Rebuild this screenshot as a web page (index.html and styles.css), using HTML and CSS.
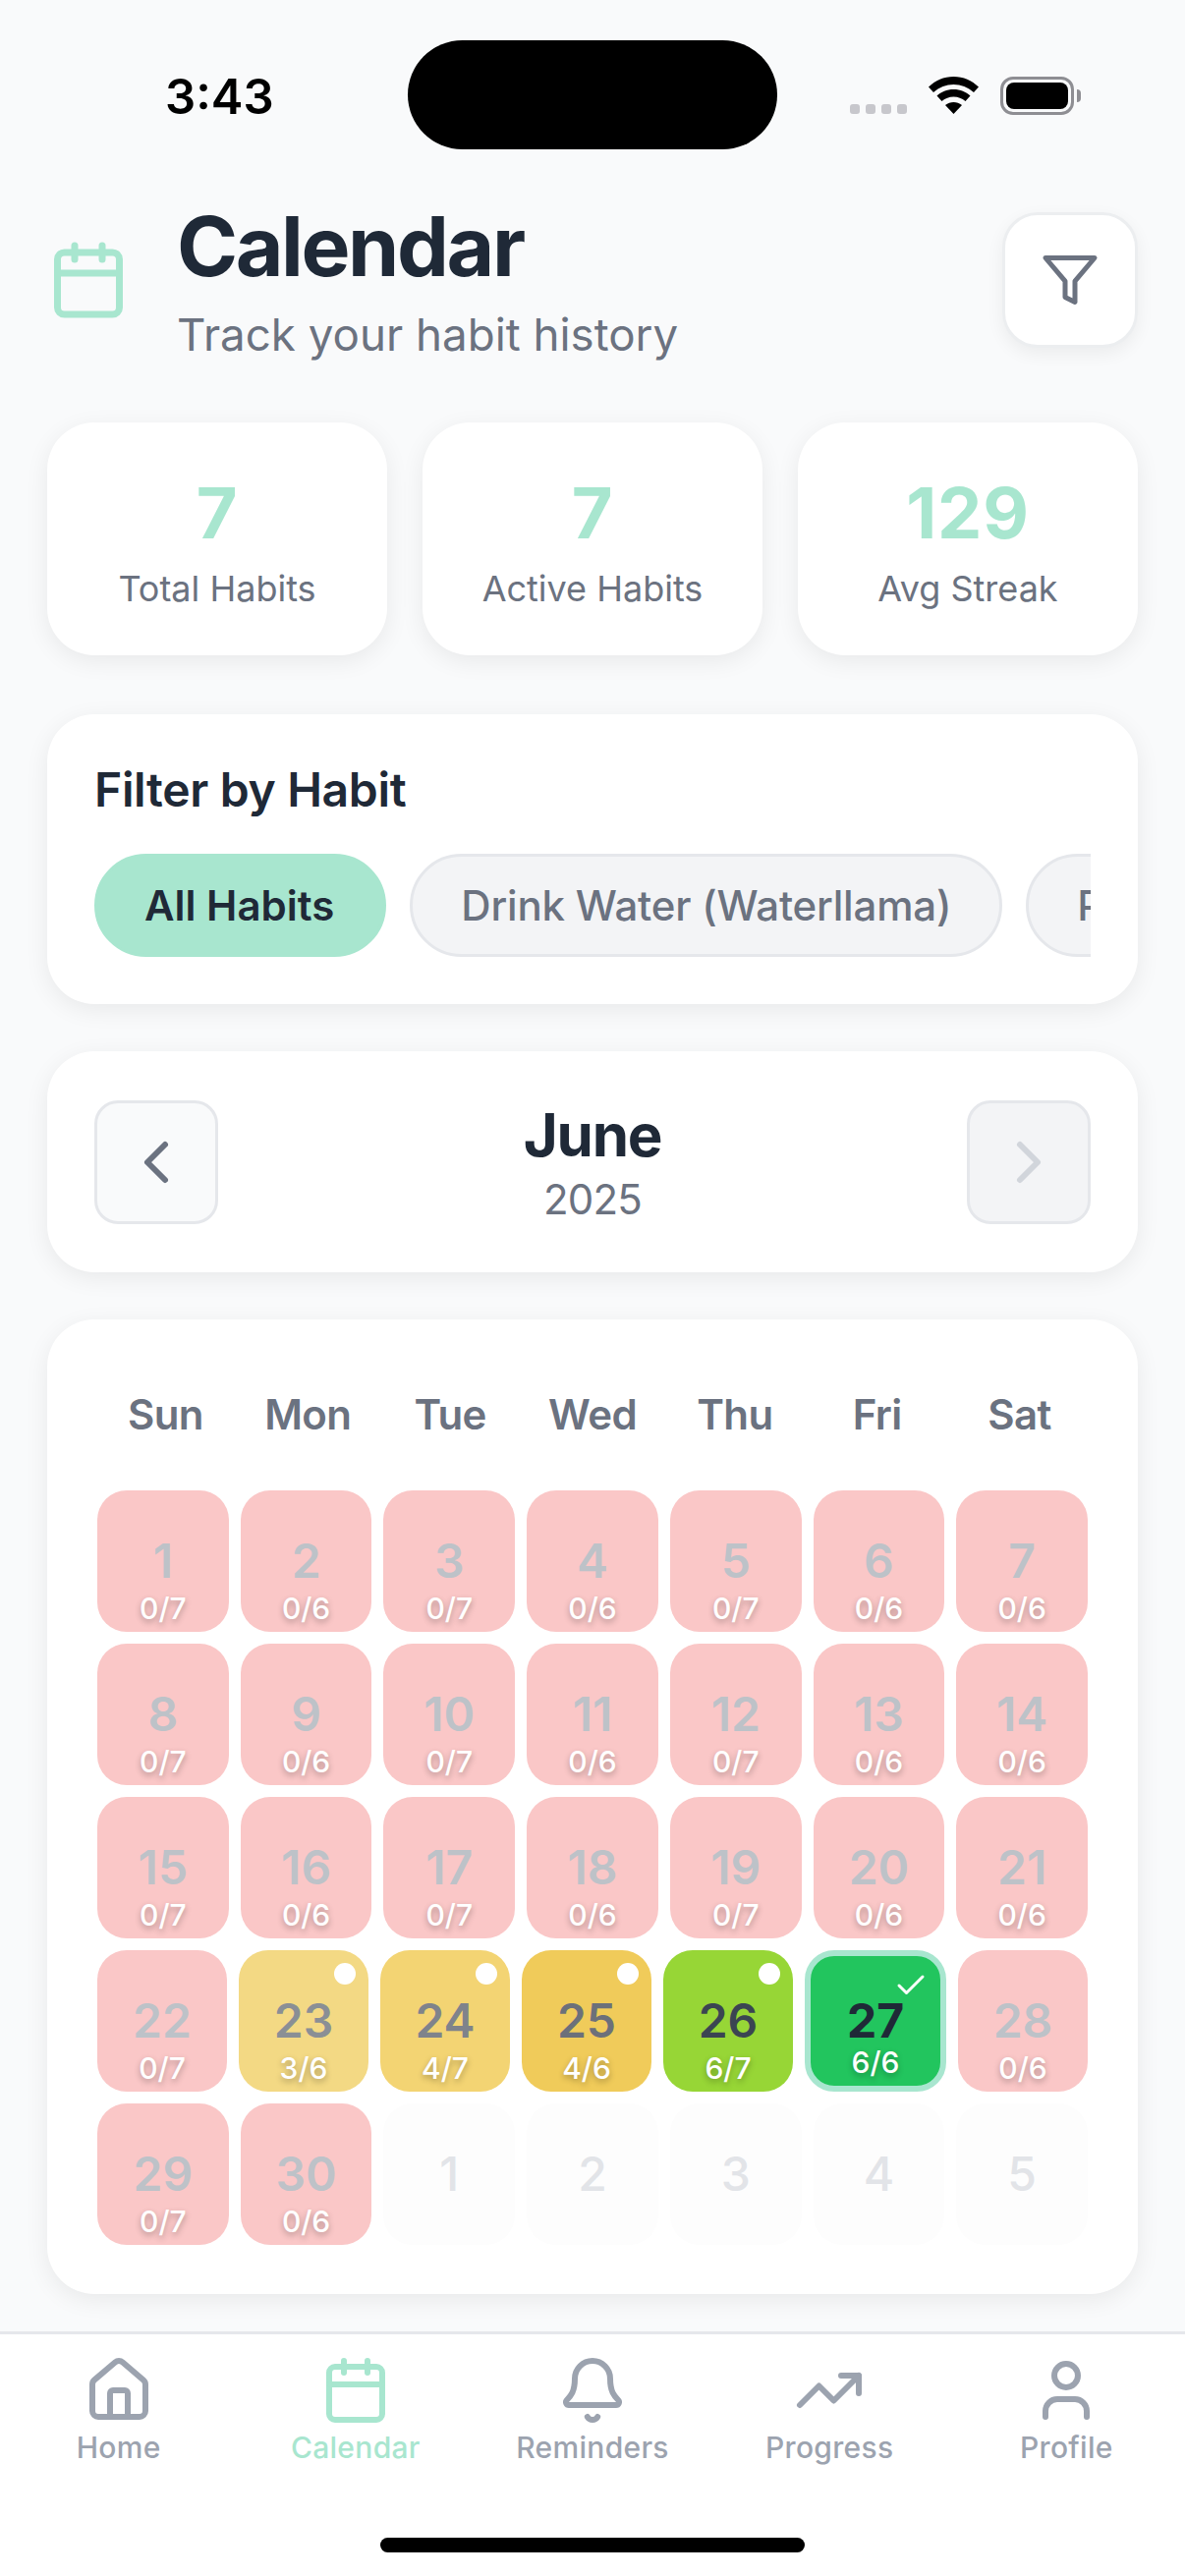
FILE: index.html
```html
<!DOCTYPE html>
<html lang="en">
<head>
<meta charset="utf-8">
<title>Calendar</title>
<link rel="stylesheet" href="styles.css">
</head>
<body>
<div class="app">
  <div class="status">
    <span class="time">3:43</span>
    <div class="island"></div>
    <div class="status-right">
      <div class="dots"><i></i><i></i><i></i><i></i></div>
      <svg class="wifi" viewBox="0 0 51 38"><path d="M25.5 0C15.5 0 7 4 0 10.500L5 16C11 10.800 18 8 25.500 8S40 10.800 46 16L51 10.500C44 4 35.500 0 25.500 0Z"/><path d="M25.500 13C18.500 13 13 15.500 8.500 19.500L13.500 25C17 22 21 20.500 25.500 20.500S34 22 37.500 25L42.500 19.500C38 15.500 32.500 13 25.500 13Z"/><path d="M25.500 26C22.500 26 19.500 27 17 29L25.500 38L34 29C31.500 27 28.500 26 25.500 26Z"/></svg>
      <div class="battery"><div class="battery-body"><div class="battery-fill"></div></div><div class="battery-nub"></div></div>
    </div>
  </div>
  <main class="main">
    <header class="header">
      <svg class="header-icon" viewBox="0 0 24 24"><path d="M8 2v4"/><path d="M16 2v4"/><rect x="3" y="4" width="18" height="18" rx="2"/><path d="M3 10h18"/></svg>
      <div class="header-text">
        <h1 class="title">Calendar</h1>
        <p class="subtitle">Track your habit history</p>
      </div>
      <button class="filter-btn"><svg class="filter-icon" viewBox="0 0 24 24"><polygon points="22 3 2 3 10 12.460 10 19 14 21 14 12.460 22 3"/></svg></button>
    </header>

    <section class="stats">
      <div class="stat card"><div class="stat-num">7</div><div class="stat-label">Total Habits</div></div>
      <div class="stat card"><div class="stat-num">7</div><div class="stat-label">Active Habits</div></div>
      <div class="stat card"><div class="stat-num">129</div><div class="stat-label">Avg Streak</div></div>
    </section>

    <section class="card filter-card">
      <h2 class="filter-title">Filter by Habit</h2>
      <div class="chips">
        <span class="chip chip-on">All Habits</span>
        <span class="chip">Drink Water (Waterllama)</span>
        <span class="chip">Practice</span>
      </div>
    </section>

    <section class="card month-card">
      <button class="nav-btn"><svg class="chev" viewBox="0 0 24 24"><path d="m15 18-6-6 6-6"/></svg></button>
      <div class="month-text">
        <div class="month">June</div>
        <div class="year">2025</div>
      </div>
      <button class="nav-btn nav-btn-off"><svg class="chev" viewBox="0 0 24 24"><path d="m9 18 6-6-6-6"/></svg></button>
    </section>

    <section class="card cal-card">
      <div class="weekdays">
        <span>Sun</span><span>Mon</span><span>Tue</span><span>Wed</span><span>Thu</span><span>Fri</span><span>Sat</span>
      </div>
      <div class="weeks">
        <div class="week">
          <div class="day miss"><b>1</b><small>0/7</small></div>
          <div class="day miss"><b>2</b><small>0/6</small></div>
          <div class="day miss"><b>3</b><small>0/7</small></div>
          <div class="day miss"><b>4</b><small>0/6</small></div>
          <div class="day miss"><b>5</b><small>0/7</small></div>
          <div class="day miss"><b>6</b><small>0/6</small></div>
          <div class="day miss"><b>7</b><small>0/6</small></div>
        </div>
        <div class="week">
          <div class="day miss"><b>8</b><small>0/7</small></div>
          <div class="day miss"><b>9</b><small>0/6</small></div>
          <div class="day miss"><b>10</b><small>0/7</small></div>
          <div class="day miss"><b>11</b><small>0/6</small></div>
          <div class="day miss"><b>12</b><small>0/7</small></div>
          <div class="day miss"><b>13</b><small>0/6</small></div>
          <div class="day miss"><b>14</b><small>0/6</small></div>
        </div>
        <div class="week">
          <div class="day miss"><b>15</b><small>0/7</small></div>
          <div class="day miss"><b>16</b><small>0/6</small></div>
          <div class="day miss"><b>17</b><small>0/7</small></div>
          <div class="day miss"><b>18</b><small>0/6</small></div>
          <div class="day miss"><b>19</b><small>0/7</small></div>
          <div class="day miss"><b>20</b><small>0/6</small></div>
          <div class="day miss"><b>21</b><small>0/6</small></div>
        </div>
        <div class="week">
          <div class="day miss"><b>22</b><small>0/7</small></div>
          <div class="day p3"><b>23</b><small>3/6</small><i class="dot"></i></div>
          <div class="day p4"><b>24</b><small>4/7</small><i class="dot"></i></div>
          <div class="day p5"><b>25</b><small>4/6</small><i class="dot"></i></div>
          <div class="day p6"><b>26</b><small>6/7</small><i class="dot"></i></div>
          <div class="day today"><b>27</b><small>6/6</small><svg class="check" viewBox="0 0 24 24"><path d="M20 6 9 17l-5-5"/></svg></div>
          <div class="day miss"><b>28</b><small>0/6</small></div>
        </div>
        <div class="week">
          <div class="day miss"><b>29</b><small>0/7</small></div>
          <div class="day miss"><b>30</b><small>0/6</small></div>
          <div class="day out"><b>1</b></div>
          <div class="day out"><b>2</b></div>
          <div class="day out"><b>3</b></div>
          <div class="day out"><b>4</b></div>
          <div class="day out"><b>5</b></div>
        </div>
      </div>
    </section>
  </main>

  <nav class="tabbar">
    <div class="tab">
      <svg class="tab-icon" viewBox="0 0 24 24"><path d="M15 21v-8a1 1 0 0 0-1-1h-4a1 1 0 0 0-1 1v8"/><path d="M3 10a2 2 0 0 1 .709-1.528l7-5.999a2 2 0 0 1 2.582 0l7 5.999A2 2 0 0 1 21 10v9a2 2 0 0 1-2 2H5a2 2 0 0 1-2-2z"/></svg>
      <span>Home</span>
    </div>
    <div class="tab tab-on">
      <svg class="tab-icon" viewBox="0 0 24 24"><path d="M8 2v4"/><path d="M16 2v4"/><rect x="3" y="4" width="18" height="18" rx="2"/><path d="M3 10h18"/></svg>
      <span>Calendar</span>
    </div>
    <div class="tab">
      <svg class="tab-icon" viewBox="0 0 24 24"><path d="M10.268 21a2 2 0 0 0 3.464 0"/><path d="M3.262 15.326A1 1 0 0 0 4 17h16a1 1 0 0 0 .74-1.673C19.410 13.956 18 12.499 18 8A6 6 0 0 0 6 8c0 4.499-1.411 5.956-2.738 7.326"/></svg>
      <span>Reminders</span>
    </div>
    <div class="tab">
      <svg class="tab-icon" viewBox="0 0 24 24"><path d="M16 7h6v6"/><path d="m22 7-8.500 8.500-5-5L2 17"/></svg>
      <span>Progress</span>
    </div>
    <div class="tab">
      <svg class="tab-icon" viewBox="0 0 24 24"><path d="M19 21v-2a4 4 0 0 0-4-4H9a4 4 0 0 0-4 4v2"/><circle cx="12" cy="7" r="4"/></svg>
      <span>Profile</span>
    </div>
    <div class="home-bar"></div>
  </nav>
</div>
</body>
</html>
```

FILE: styles.css
```css
* { box-sizing: border-box; margin: 0; padding: 0; }
html, body { width: 1206px; height: 2622px; overflow: hidden; }
body { background: #f9fafb; font-family: Inter, "Noto Sans", sans-serif; color: #1f2937; }
svg { display: block; fill: none; stroke: currentColor; stroke-width: 2; stroke-linecap: round; stroke-linejoin: round; }
button { font: inherit; cursor: pointer; }

.app { width: 1206px; height: 2622px; display: flex; flex-direction: column; }

/* status bar */
.status { position: relative; height: 200px; flex: none; display: flex; justify-content: space-between; align-items: flex-start; padding: 70px 106px 0 168px; }
.time { font-size: 49px; font-weight: 600; line-height: 58px; color: #000; }
.island { position: absolute; left: 415px; top: 41px; width: 376px; height: 111px; border-radius: 56px; background: #000; }
.status-right { display: flex; align-items: flex-start; margin-top: 8px; }
.dots { display: flex; gap: 6px; margin: 28px 22px 0 0; }
.dots i { width: 10px; height: 10px; border-radius: 3px; background: #c7c7cc; }
.wifi { width: 51px; height: 38px; fill: #000; stroke: none; margin-right: 22px; }
.battery { display: flex; align-items: center; }
.battery-body { width: 75px; height: 39px; border: 3px solid #8e8e93; border-radius: 13px; padding: 3px; }
.battery-fill { width: 100%; height: 100%; background: #000; border-radius: 8px; }
.battery-nub { width: 4px; height: 13px; background: #8e8e93; border-radius: 0 6px 6px 0; margin-left: 3px; }

/* main */
.main { flex: 1; min-height: 0; overflow: hidden; padding: 0 48px; display: flex; flex-direction: column; gap: 48px; }
.card { background: #fff; border-radius: 48px; box-shadow: 0 6px 24px rgba(0, 0, 0, .07); }

.header { display: flex; align-items: center; gap: 48px; height: 170px; margin-bottom: 12px; flex: none; }
.header-icon { width: 84px; height: 84px; color: #a8e6cf; flex: none; }
.header-text { flex: 1; padding-top: 5px; }
.title { font-size: 84px; line-height: 102px; font-weight: 700; letter-spacing: -2.4px; color: #1f2937; }
.subtitle { font-size: 45.700px; line-height: 68px; margin-top: 5px; color: #6b7280; }
.filter-btn { width: 138px; height: 138px; flex: none; border: 3px solid #eceef0; border-radius: 36px; background: #fff; display: flex; align-items: center; justify-content: center; box-shadow: 0 6px 18px rgba(0, 0, 0, .06); }
.filter-icon { width: 60px; height: 60px; color: #6b7280; }

.stats { display: flex; gap: 36px; margin-bottom: 12px; flex: none; }
.stat { flex: 1; height: 237px; padding-top: 48px; text-align: center; border-radius: 48px; }
.stat-num { font-size: 72px; line-height: 87px; font-weight: 700; letter-spacing: .8px; color: #a8e6cf; }
.stat-label { font-size: 36px; line-height: 44px; margin-top: 12px; color: #6b7280; }

.filter-card { padding: 48px; flex: none; }
.filter-title { font-size: 48px; line-height: 58px; font-weight: 600; letter-spacing: -.33px; color: #1f2937; margin-bottom: 36px; }
.chips { display: flex; gap: 24px; overflow: hidden; }
.chip { flex: none; font-size: 42px; line-height: 51px; font-weight: 500; letter-spacing: -.2px; padding: 24px 49px; border: 3px solid #e5e7eb; border-radius: 60px; background: #f3f4f6; color: #6b7280; }
.chip-on { background: #a8e6cf; border-color: #a8e6cf; color: #1f2937; font-weight: 600; letter-spacing: 0; padding: 24px 50px 24px 48px; }

.month-card { display: flex; align-items: center; justify-content: space-between; padding: 50px 48px 49px; flex: none; }
.nav-btn { width: 126px; height: 126px; border: 3px solid #e5e7eb; border-radius: 24px; background: #f9fafb; color: #6b7280; display: flex; align-items: center; justify-content: center; }
.nav-btn-off { background: #f3f4f6; color: #d1d5db; }
.chev { width: 72px; height: 72px; flex: none; }
.month-text { text-align: center; }
.month { font-size: 60px; line-height: 68px; font-weight: 700; letter-spacing: -1.2px; color: #1f2937; }
.year { font-size: 42px; line-height: 51px; margin-top: 6px; letter-spacing: -.8px; color: #6b7280; }

.cal-card { padding: 48px 51px 50px; flex: none; }
.weekdays { display: flex; gap: 12px; padding: 24px 3px; margin-bottom: 28px; }
.weekdays span { flex: 1; text-align: center; font-size: 42px; line-height: 50px; font-weight: 600; letter-spacing: -.6px; color: #6b7280; }
.weeks { display: flex; flex-direction: column; gap: 12px; }
.week { display: flex; gap: 12px; }
.day { position: relative; flex: 1 1 0; height: 144px; border-radius: 30px; display: flex; align-items: center; justify-content: center; }
.day b { font-size: 48px; font-weight: 600; line-height: 58px; color: #1f2937; }
.day small { position: absolute; left: 0; right: 0; bottom: 6px; text-align: center; font-size: 30px; line-height: 36px; font-weight: 500; color: #fff; text-shadow: 0 3px 6px rgba(0, 0, 0, .3); }
.dot { position: absolute; top: 13px; right: 13px; width: 22px; height: 22px; border-radius: 50%; background: #fff; }
.miss { background: #fac7c7; }
.miss b { color: #bdc2c8; }
.p3 { background: #f3d984; }
.p3 b { color: #8a8f95; }
.p4 { background: #f3d473; }
.p4 b { color: #7f838b; }
.p5 { background: #f0cb5a; }
.p5 b { color: #6c707a; }
.p6 { background: #97d636; }
.p6 b { color: #3b4552; }
.today { background: #22c55e; border: 6px solid #a8e6cf; }
.today b { font-weight: 700; }
.check { position: absolute; top: 12px; right: 12px; width: 36px; height: 36px; color: #fff; }
.out { background: #fdfdfd; }
.out b { color: #e2e4e8; font-weight: 500; }

/* tab bar */
.tabbar { position: relative; height: 249px; flex: none; background: #fff; border-top: 3px solid #e5e7eb; display: flex; padding-top: 21px; align-items: flex-start; }
.tab { flex: 1; display: flex; flex-direction: column; align-items: center; color: #9ca3af; font-size: 30px; line-height: 36px; font-weight: 500; letter-spacing: .3px; gap: 4px; }
.tab-icon { width: 72px; height: 72px; }
.tab-on { color: #a8e6cf; }
.home-bar { position: absolute; left: 387px; top: 207px; width: 432px; height: 15px; border-radius: 8px; background: #000; }
```
